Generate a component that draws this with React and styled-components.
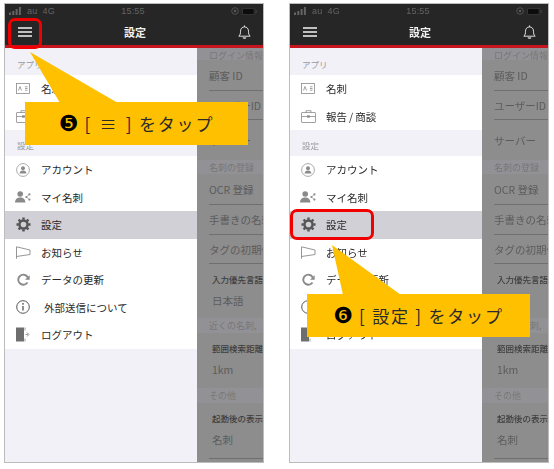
import React from "react";
import styled, { createGlobalStyle } from "styled-components";

const GlobalStyle = createGlobalStyle`
  html, body {
    margin: 0;
    padding: 0;
    background: #fff;
  }
  body {
    font-family: "Noto Sans CJK JP", "Liberation Sans", sans-serif;
  }
`;

const Page = styled.div`
  display: flex;
  gap: 25px;
  width: 554px;
  height: 469px;
  padding: 3px 0 0 4px;
  box-sizing: border-box;
  overflow: hidden;
  filter: blur(0.35px);
`;

const Phone = styled.div`
  position: relative;
  display: flex;
  flex-direction: column;
  flex: 0 0 260px;
  width: 260px;
  min-width: 0;
  height: 460px;
  box-sizing: border-box;
  border: 1px solid #bcbcbc;
  background: #f1f1f7;
`;

const StatusBar = styled.div`
  display: flex;
  align-items: center;
  height: 14px;
  padding: 0 6px 0 4px;
  background: #262626;
  color: #646464;
  font-family: "Liberation Sans", sans-serif;
  font-size: 9px;
  letter-spacing: 0.2px;
`;

const StatusLeft = styled.div`
  display: flex;
  align-items: center;
  gap: 5px;
  flex: 1;
`;

const StatusRight = styled.div`
  display: flex;
  align-items: center;
  justify-content: flex-end;
  gap: 3px;
  flex: 1;
`;

const NavBar = styled.div`
  display: flex;
  align-items: center;
  justify-content: space-between;
  height: 30px;
  box-sizing: border-box;
  padding: 0 12px 0 13px;
  background: #262626;
  border-bottom: 3px solid #c5161f;
`;

const NavTitle = styled.div`
  color: #f2f2f2;
  font-size: 11px;
  font-weight: 700;
`;

const Body = styled.div`
  display: flex;
  flex: 1;
  min-height: 0;
  min-width: 0;
`;

const Drawer = styled.div`
  flex: 0 0 192px;
  background: #f1f1f7;
`;

const DrawerSection = styled.div`
  display: flex;
  align-items: flex-end;
  height: ${(p) => p.$height}px;
  padding: 0 0 5px 12px;
  box-sizing: border-box;
  color: #9a9a9e;
  font-size: 8.5px;
`;

const DrawerRow = styled.div`
  display: flex;
  align-items: center;
  height: 27.5px;
  background: ${(p) => (p.$active ? "#d0d0d6" : "#fff")};
  color: #2a2a2a;
  font-size: 10.5px;
`;

const IconCell = styled.div`
  display: flex;
  align-items: center;
  justify-content: center;
  flex: 0 0 36px;
`;

const RowLabel = styled.span`
  margin-left: ${(p) => p.$indent || 0}px;
  white-space: nowrap;
`;

const Pane = styled.div`
  flex: 1;
  min-width: 0;
  overflow: hidden;
  background: #8d8d8d;
  white-space: nowrap;
`;

const PaneSection = styled.div`
  display: flex;
  align-items: center;
  height: ${(p) => p.$height}px;
  padding: ${(p) => p.$pad || 0}px 0 0 12px;
  box-sizing: border-box;
  background: #929296;
  color: #777;
  font-size: 9px;
`;

const PaneRow = styled.div`
  display: flex;
  align-items: center;
  height: ${(p) => p.$height}px;
  margin-left: 12px;
  box-sizing: border-box;
  border-bottom: ${(p) => (p.$line ? "1px solid #6f6f6f" : "none")};
  color: #5c5c5c;
  font-size: 10.5px;
`;

const PaneStack = styled.div`
  display: flex;
  flex-direction: column;
  height: ${(p) => p.$height}px;
  padding: 9px 0 0 15px;
  box-sizing: border-box;
`;

const StackLabel = styled.div`
  color: #3e3e3e;
  font-size: 8.5px;
  font-weight: 500;
  line-height: 12px;
`;

const StackValue = styled.div`
  margin-top: 9px;
  color: #5c5c5c;
  font-size: 10.5px;
  line-height: 14px;
`;

const PaneRule = styled.div`
  margin: 0 0 0 12px;
  height: 1px;
  background: #6f6f6f;
`;

const Pointer = styled.svg`
  position: absolute;
  left: -1px;
  top: -1px;
  overflow: visible;
`;

const Callout = styled.div`
  position: absolute;
  left: ${(p) => p.$left}px;
  top: ${(p) => p.$top}px;
  display: flex;
  align-items: center;
  justify-content: center;
  width: 223px;
  height: 43px;
  background: #ffc000;
  color: #2a2a2a;
  font-size: 17px;
  letter-spacing: 1.8px;
  white-space: pre;
`;

const Step = styled.span`
  margin-right: 6px;
  color: #000;
  font-family: "DejaVu Sans", sans-serif;
  font-size: 22px;
  letter-spacing: 0;
`;

const Ring = styled.div`
  position: absolute;
  left: ${(p) => p.$left}px;
  top: ${(p) => p.$top}px;
  width: ${(p) => p.$width}px;
  height: ${(p) => p.$height}px;
  box-sizing: border-box;
  border: 3px solid #f00000;
  border-radius: 7px;
`;

const gray = "#8a8a8a";

const CardIcon = () => (
  <svg width="14" height="11" viewBox="0 0 14 11" fill="none" stroke={gray} strokeWidth="0.8">
    <rect x="0.5" y="0.5" width="13" height="10" />
    <path d="M2.5 7.5 L4 3.5 L5.5 7.5 M9 3.8h2.5M9 5.5h2.5M9 7.2h2.5" />
  </svg>
);

const CaseIcon = () => (
  <svg width="15" height="13" viewBox="0 0 15 13" fill="none" stroke={gray} strokeWidth="0.8">
    <rect x="0.5" y="2.5" width="14" height="10" rx="0.5" />
    <path d="M5 2.5V0.7h5v1.8M0.5 6.5h14M6 6.5h3" />
    <rect x="6.5" y="5.8" width="2" height="1.4" fill={gray} />
  </svg>
);

const AccountIcon = () => (
  <svg width="14" height="14" viewBox="0 0 14 14" fill="none">
    <circle cx="7" cy="7" r="6.4" stroke="#a0a0a0" strokeWidth="0.9" />
    <circle cx="7" cy="5.2" r="2" fill={gray} />
    <path d="M3.6 10.6c0-2 1.5-3 3.4-3s3.4 1 3.4 3z" fill={gray} />
  </svg>
);

const MyCardIcon = () => (
  <svg width="16" height="12" viewBox="0 0 16 12" fill={gray}>
    <circle cx="5.2" cy="3" r="2.8" />
    <path d="M0 11.6c0-3.4 2.2-5.2 5.2-5.2s5.2 1.8 5.2 5.2z" />
    <circle cx="14.4" cy="3.4" r="1.1" />
    <circle cx="11.4" cy="6" r="1.1" />
    <circle cx="14.4" cy="8.6" r="1.1" />
    <path d="M14.4 3.4 11.4 6 14.4 8.6" fill="none" stroke={gray} strokeWidth="0.6" />
  </svg>
);

const GearIcon = () => (
  <svg width="15" height="15" viewBox="0 0 16 16" fill="none" stroke="#555">
    <circle cx="8" cy="8" r="4.3" strokeWidth="2.6" />
    <path
      d="M8 0.5v2.5M8 13v2.5M0.5 8h2.5M13 8h2.5M2.7 2.7l1.8 1.8M11.5 11.5l1.8 1.8M2.7 13.3l1.8-1.8M11.5 4.5l1.8-1.8"
      strokeWidth="2.6"
    />
  </svg>
);

const FlagIcon = () => (
  <svg width="15" height="13" viewBox="0 0 15 13" fill="none" stroke={gray} strokeWidth="0.9">
    <path d="M0.5 12.8V0.8L14 4V8.5L0.5 10.5" />
  </svg>
);

const RefreshIcon = () => (
  <svg width="14" height="13" viewBox="0 0 14 13" fill="none" stroke={gray} strokeWidth="2">
    <path d="M11.5 9.5A5 5 0 1 1 9.8 2.3L12 4.5" />
    <path d="M13.7 2.2V6.8H9z" fill={gray} stroke="none" />
  </svg>
);

const InfoIcon = () => (
  <svg width="14" height="14" viewBox="0 0 14 14" fill="none" stroke="#444">
    <circle cx="7" cy="7" r="6.3" strokeWidth="0.9" />
    <path d="M7 6v4.5" strokeWidth="1.2" />
    <circle cx="7" cy="3.9" r="0.8" fill="#444" stroke="none" />
  </svg>
);

const LogoutIcon = () => (
  <svg width="14" height="15" viewBox="0 0 14 15" fill="none">
    <path d="M0 0.5h8v14l-8 0z" fill="#6e6e6e" />
    <path d="M9 0.5v3M9 11.5v3" stroke={gray} strokeWidth="0.8" />
    <path d="M9.5 7.5h2.5M11 5.5l2 2-2 2" stroke={gray} strokeWidth="0.9" />
  </svg>
);

const MenuIcon = () => (
  <svg width="14" height="10" viewBox="0 0 14 10" stroke="#f4f4f4" strokeWidth="1.4">
    <path d="M0 1h14M0 5h14M0 9h14" />
  </svg>
);

const BellIcon = () => (
  <svg width="13" height="14" viewBox="0 0 13 14" fill="none" stroke="#f2f2f2" strokeWidth="0.9">
    <path d="M0.8 11.2c1.5-1.3 1.7-2.7 1.7-5 0-2.5 1.6-4.3 4-4.3s4 1.8 4 4.3c0 2.3 0.2 3.7 1.7 5z" />
    <path d="M6.5 0.4v1.5" />
    <path d="M5 12.6c0.4 0.8 2.6 0.8 3 0" strokeWidth="1.2" />
  </svg>
);

const SignalIcon = () => (
  <svg width="13" height="8" viewBox="0 0 13 8" fill="#646464">
    <rect x="0" y="5.5" width="2" height="2.5" />
    <rect x="3.3" y="4" width="2" height="4" />
    <rect x="6.6" y="2" width="2" height="6" />
    <rect x="9.9" y="0" width="2" height="8" />
  </svg>
);

const BatteryIcon = () => (
  <svg width="15" height="7" viewBox="0 0 15 7" fill="none">
    <rect x="0.3" y="0.3" width="13" height="6.4" rx="1.5" stroke="#444" strokeWidth="0.5" />
    <rect x="1" y="1" width="10.5" height="5" rx="1" fill="#0c0c0c" />
    <rect x="13.8" y="2.3" width="1" height="2.4" fill="#444" />
  </svg>
);

const OrientationIcon = () => (
  <svg width="8" height="8" viewBox="0 0 8 8" fill="none" stroke="#5c5c5c" strokeWidth="0.8">
    <circle cx="4" cy="4" r="3.3" />
    <circle cx="4" cy="4" r="1.2" fill="#5c5c5c" stroke="none" />
  </svg>
);

const appItems = [
  { label: "名刺", icon: <CardIcon /> },
  { label: "報告\u2009/\u2009商談", icon: <CaseIcon /> },
];

const settingItems = [
  { label: "アカウント", icon: <AccountIcon /> },
  { label: "マイ名刺", icon: <MyCardIcon /> },
  { label: "設定", icon: <GearIcon />, active: true },
  { label: "お知らせ", icon: <FlagIcon /> },
  { label: "データの更新", icon: <RefreshIcon /> },
  { label: "外部送信について", icon: <InfoIcon />, indent: 3 },
  { label: "ログアウト", icon: <LogoutIcon /> },
];

const Row = ({ label, icon, active, indent }) => (
  <DrawerRow $active={active}>
    <IconCell>{icon}</IconCell>
    <RowLabel $indent={indent}>{label}</RowLabel>
  </DrawerRow>
);

const SettingsPane = () => (
  <Pane>
    <PaneSection $height={12} $pad={3}>ログイン情報</PaneSection>
    <PaneRow $height={31} $line>顧客 ID</PaneRow>
    <PaneRow $height={29} $line>ユーザーID</PaneRow>
    <PaneRow $height={40}>サーバー</PaneRow>
    <PaneSection $height={14}>名刺の登録</PaneSection>
    <PaneRow $height={31} $line>OCR 登録</PaneRow>
    <PaneRow $height={30} $line>手書きの名刺</PaneRow>
    <PaneRow $height={29} $line>タグの初期値</PaneRow>
    <PaneStack $height={54}>
      <StackLabel>入力優先言語</StackLabel>
      <StackValue>日本語</StackValue>
    </PaneStack>
    <PaneSection $height={15}>近くの名刺,</PaneSection>
    <PaneStack $height={55}>
      <StackLabel>範囲検索距離</StackLabel>
      <StackValue>1km</StackValue>
    </PaneStack>
    <PaneSection $height={15}>その他</PaneSection>
    <PaneStack $height={55}>
      <StackLabel>起動後の表示</StackLabel>
      <StackValue>名刺</StackValue>
    </PaneStack>
    <PaneRule />
  </Pane>
);

const Screen = ({ step, text, points, calloutLeft, calloutTop, ring }) => (
  <Phone>
    <StatusBar>
      <StatusLeft>
        <SignalIcon />
        <span>au</span>
        <span>4G</span>
      </StatusLeft>
      <span>15:55</span>
      <StatusRight>
        <OrientationIcon />
        <BatteryIcon />
      </StatusRight>
    </StatusBar>
    <NavBar>
      <MenuIcon />
      <NavTitle>設定</NavTitle>
      <BellIcon />
    </NavBar>
    <Body>
      <Drawer>
        <DrawerSection $height={27}>アプリ</DrawerSection>
        {appItems.map((item) => (
          <Row key={item.label} {...item} />
        ))}
        <DrawerSection $height={26}>設定</DrawerSection>
        {settingItems.map((item) => (
          <Row key={item.label} {...item} />
        ))}
      </Drawer>
      <SettingsPane />
    </Body>
    <Pointer width="260" height="460" viewBox="0 0 260 460">
      <polygon points={points} fill="#ffc000" />
    </Pointer>
    <Callout $left={calloutLeft} $top={calloutTop}>
      <Step>{step}</Step>
      {text}
    </Callout>
    <Ring {...ring} />
  </Phone>
);

const App = () => (
  <>
    <GlobalStyle />
    <Page>
      <Screen
        step="❺"
        text={"[\u2004≡\u2004] をタップ"}
        points="26,49 114,100 56,100"
        calloutLeft={20}
        calloutTop={98}
        ring={{ $left: 3, $top: 14, $width: 34, $height: 31 }}
      />
      <Screen
        step="❻"
        text="[ 設定 ] をタップ"
        points="43,242 112,292 54,292"
        calloutLeft={17}
        calloutTop={290}
        ring={{ $left: 0, $top: 205, $width: 84, $height: 31 }}
      />
    </Page>
  </>
);

export default App;
